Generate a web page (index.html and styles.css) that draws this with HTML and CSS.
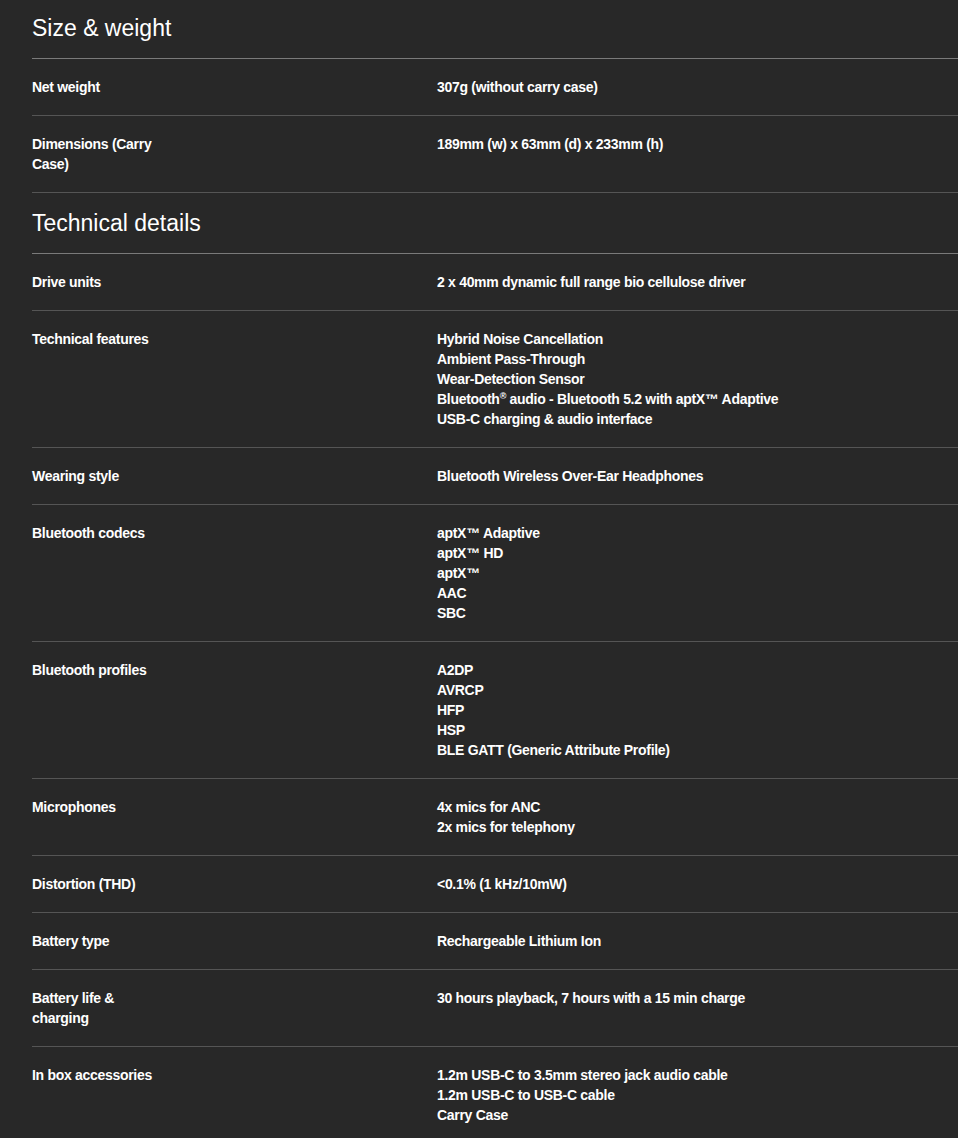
FILE: index.html
```html
<!DOCTYPE html>
<html lang="en">
<head>
<meta charset="utf-8">
<title>Specifications</title>
<link rel="stylesheet" href="styles.css">
</head>
<body>
<main class="specs">
  <section class="group first">
    <h2 class="group-title">Size &amp; weight</h2>
    <dl class="rows">
      <div class="row"><dt class="label">Net weight</dt><dd class="value">307g (without carry case)</dd></div>
      <div class="row"><dt class="label">Dimensions (Carry Case)</dt><dd class="value">189mm (w) x 63mm (d) x 233mm (h)</dd></div>
    </dl>
  </section>
  <section class="group">
    <h2 class="group-title">Technical details</h2>
    <dl class="rows">
      <div class="row"><dt class="label">Drive units</dt><dd class="value">2 x 40mm dynamic full range bio cellulose driver</dd></div>
      <div class="row"><dt class="label">Technical features</dt><dd class="value">Hybrid Noise Cancellation<br>Ambient Pass-Through<br>Wear-Detection Sensor<br>Bluetooth<sup class="mark">®</sup> audio - Bluetooth 5.2 with aptX™ Adaptive<br>USB-C charging &amp; audio interface</dd></div>
      <div class="row"><dt class="label">Wearing style</dt><dd class="value">Bluetooth Wireless Over-Ear Headphones</dd></div>
      <div class="row"><dt class="label">Bluetooth codecs</dt><dd class="value">aptX™ Adaptive<br>aptX™ HD<br>aptX™<br>AAC<br>SBC</dd></div>
      <div class="row"><dt class="label">Bluetooth profiles</dt><dd class="value">A2DP<br>AVRCP<br>HFP<br>HSP<br>BLE GATT (Generic Attribute Profile)</dd></div>
      <div class="row"><dt class="label">Microphones</dt><dd class="value">4x mics for ANC<br>2x mics for telephony</dd></div>
      <div class="row"><dt class="label">Distortion (THD)</dt><dd class="value">&lt;0.1% (1 kHz/10mW)</dd></div>
      <div class="row"><dt class="label">Battery type</dt><dd class="value">Rechargeable Lithium Ion</dd></div>
      <div class="row"><dt class="label">Battery life &amp; charging</dt><dd class="value">30 hours playback, 7 hours with a 15 min charge</dd></div>
      <div class="row"><dt class="label">In box accessories</dt><dd class="value">1.2m USB-C to 3.5mm stereo jack audio cable<br>1.2m USB-C to USB-C cable<br>Carry Case</dd></div>
    </dl>
  </section>
</main>
</body>
</html>
```
FILE: styles.css
```css
html, body {
  margin: 0;
  padding: 0;
  background: #282828;
}
body {
  color: #ffffff;
  font-family: "Liberation Sans", Arial, sans-serif;
}
.specs {
  padding-left: 32px;
}
.group-title {
  margin: 0;
  font-size: 23px;
  font-weight: 400;
  line-height: 28px;
  padding: 16px 0;
  border-bottom: 1px solid #7a7a7a;
}
.first .group-title {
  padding-top: 14px;
}
.rows {
  margin: 0;
}
.row {
  display: grid;
  grid-template-columns: 405px 1fr;
  padding: 18px 0;
  border-bottom: 1px solid #555555;
  font-size: 14px;
  line-height: 20px;
  font-weight: 700;
  letter-spacing: -0.3px;
}
.group:last-child .row:last-child {
  border-bottom: none;
}
.label {
  margin: 0;
  max-width: 130px;
}
.value {
  margin: 0;
}
.mark {
  font-size: 9px;
  line-height: 0;
  vertical-align: 5px;
}
```
